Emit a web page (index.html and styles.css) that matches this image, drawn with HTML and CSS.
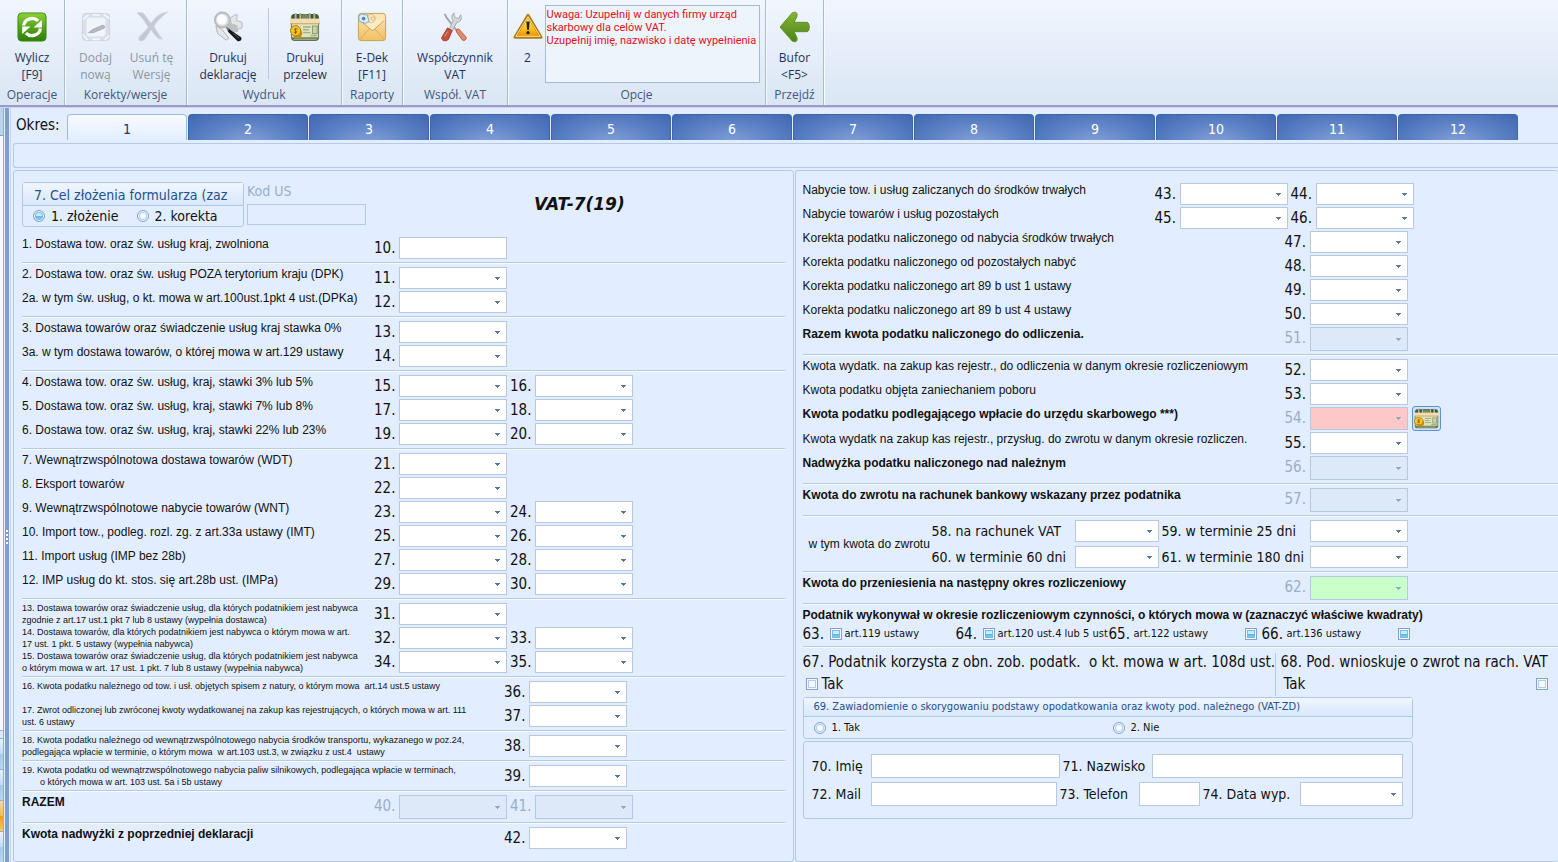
FILE: index.html
```
<!DOCTYPE html>
<html lang="pl">
<head>
<meta charset="utf-8">
<title>VAT-7(19)</title>
<link rel="stylesheet" href="styles.css">
</head>
<body>
<svg class="defs" aria-hidden="true">
  <defs>
    <linearGradient id="gGreen" x1="0" y1="0" x2="0" y2="1"><stop offset="0" stop-color="#8fd03a"/><stop offset=".5" stop-color="#55a51c"/><stop offset="1" stop-color="#2f7d0c"/></linearGradient>
    <linearGradient id="gArrow" x1="0" y1="0" x2="0" y2="1"><stop offset="0" stop-color="#86b535"/><stop offset="1" stop-color="#4c8219"/></linearGradient>
    <linearGradient id="gWarn" x1="0" y1="0" x2="0" y2="1"><stop offset="0" stop-color="#fff27a"/><stop offset=".6" stop-color="#fcc419"/><stop offset="1" stop-color="#f08c00"/></linearGradient>
    <linearGradient id="gMail" x1="0" y1="0" x2="0" y2="1"><stop offset="0" stop-color="#fde9b8"/><stop offset="1" stop-color="#f0bf62"/></linearGradient>
    <symbol id="money" viewBox="0 0 32 32" preserveAspectRatio="none">
      <rect x="1" y="2" width="30" height="29" rx="4" fill="#64764f"/>
      <rect x="2" y="2" width="28" height="7" rx="3" fill="#41553b"/>
      <path d="M6 1v7M11 1v7M21 1v7M26 1v7" stroke="#a9b892" stroke-width="2"/>
      <ellipse cx="16" cy="5" rx="4" ry="3" fill="#75875f"/>
      <rect x="2" y="12" width="28" height="15" fill="#dfe3bd"/>
      <path d="M14 16h8M14 19h6M14 22h8M22 25h7" stroke="#a3b083" stroke-width="1.500" fill="none"/>
      <rect x="24" y="15" width="5" height="8" fill="#cdd3a6" stroke="#8a996d"/>
      <rect x="0" y="7" width="32" height="5" fill="#f4dcb0"/>
      <path d="M0 12.500h32" stroke="#c9a873"/>
      <path d="M4 29h24" stroke="#b9c49a"/>
      <circle cx="8" cy="23" r="5" fill="#c98e08"/><circle cx="6" cy="20" r="5.500" fill="#f4c430" stroke="#a87708"/>
      <path d="M8 18c-3-1-4 1-2 2s2 2.500-2 1.500M6 17v6.500" stroke="#8a5f00" fill="none"/>
    </symbol>
  </defs>
</svg>

<header class="ribbon">
  <section class="rgroup g-op">
    <div class="tools"><button class="tool">
      <svg viewBox="0 0 32 32"><rect x="1" y="1" width="30" height="30" rx="4" fill="url(#gGreen)" stroke="#3b8a12"/><path d="M7 14.500a9.200 9.200 0 0 1 15.500-5" fill="none" stroke="#fff" stroke-width="3.400"/><path d="M26.500 8.500v8h-9z" fill="#fff"/><path d="M25 17.500a9.200 9.200 0 0 1-15.500 5" fill="none" stroke="#fff" stroke-width="3.400"/><path d="M5.500 23.500v-8h9z" fill="#fff"/></svg>
      <span>Wylicz<br>[F9]</span></button></div>
    <h2>Operacje</h2>
  </section>
  <section class="rgroup g-kor">
    <div class="tools"><button class="tool" disabled>
      <svg viewBox="0 0 32 32"><rect x="1.500" y="1.500" width="29" height="29" rx="4" fill="#d9dfe9" stroke="#cbd1dc"/><rect x="6" y="6" width="20" height="20" rx="3" fill="#f1f5fa" stroke="#e4e9f0"/><path d="M2 8l6-5M24 2l6 5M2 24l5 6M25 30l5-5M12 3h8M12 29h8" stroke="#f2f5fa" stroke-width="2"/><path d="M8 22l4-3 11-5 2 1v2l-12 5z" fill="#b5bac3" stroke="#a4aab5"/></svg>
      <span>Dodaj<br>nową</span></button>
    <button class="tool" disabled>
      <svg viewBox="0 0 32 32"><path d="M0 1c5-1 7 0 9 3l6 8C19 6 24 1 33 0c-6 4-11 9-15 15 3 6 6 10 9 14-5 0-7-3-12-10C11 25 9 30 5 31c-3 0-4-2-2-5 3-3 6-6 9-10C8 10 5 5 0 1z" fill="#c2c8d4" stroke="#d3d9e2"/></svg>
      <span>Usuń tę<br>Wersję</span></button></div>
    <h2>Korekty/wersje</h2>
  </section>
  <section class="rgroup g-wyd">
    <div class="tools"><button class="tool">
      <svg viewBox="0 0 32 32"><path d="M18 7l5-4 3 0-1 6 6 2v6l-9 3z" fill="#e3e5e7" stroke="#b4b7bb"/><path d="M15 11l11 3 1 7-9 2z" fill="#bdc0c4"/><path d="M3 15l6 3 8 10-3 2-9-7z" fill="#e4e6e8" stroke="#b0b3b7"/><path d="M13 15l4 2 2 3-3 1z" fill="#777"/><path d="M17 18l13 9c1 2 0 5-4 4L16 21z" fill="#171717"/><path d="M22 23l6 5" stroke="#666"/><circle cx="10" cy="8.500" r="8" fill="#d9dbde" stroke="#b9bbbf" stroke-width="2"/><circle cx="9.500" cy="8" r="5.500" fill="#fafbfc"/></svg>
      <span>Drukuj<br>deklarację</span></button>
    <span class="tsep"></span>
    <button class="tool"><svg><use href="#money"/></svg>
      <span>Drukuj<br>przelew</span></button></div>
    <h2>Wydruk</h2>
  </section>
  <section class="rgroup g-rap">
    <div class="tools"><button class="tool">
      <svg viewBox="0 0 32 32"><rect x="1.500" y="1.500" width="29" height="29" rx="3" fill="url(#gMail)" stroke="#c79a52"/><path d="M2 30l11-12M30 30L19 18" stroke="#d6ab60"/><path d="M2 8l13 11c1 1 2 1 3 0L30 8" fill="#fdebc2" stroke="#c99a4c"/><path d="M2 8h28" stroke="#fde9ba" stroke-width="2"/><circle cx="15" cy="7" r="4.500" fill="none" stroke="#d3bf95"/><circle cx="17" cy="7" r="2" fill="none" stroke="#d3bf95"/><path d="M2 4l3-2 3 1 3 0 1 4 1 3-4 2-4-1-3-2z" fill="#dcecf6" stroke="#7aa5bf"/><circle cx="7" cy="7" r="2" fill="#4f8bb5"/></svg>
      <span>E-Dek<br>[F11]</span></button></div>
    <h2>Raporty</h2>
  </section>
  <section class="rgroup g-wsp">
    <div class="tools"><button class="tool">
      <svg viewBox="0 0 32 32"><path d="M5 2l2 4 11 14" stroke="#a0a6ac" stroke-width="2" fill="none"/><path d="M17 19l3-1 8 9c0 3-2 4-4 3l-6-8z" fill="#e08a70" stroke="#bd5a42"/><path d="M15 1c-3 2-3 6-1 8l-4 9 3 2 5-9c4 0 6-4 4-8l-2 4-4-1-1-3z" fill="#d3d7db" stroke="#a3a9af"/><path d="M8 17l5 3-4 9c-2 3-8 2-7-2z" fill="#c4523d" stroke="#a03a28"/><path d="M5 26l3-5" stroke="#e7a193"/></svg>
      <span>Współczynnik<br>VAT</span></button></div>
    <h2>Współ. VAT</h2>
  </section>
  <section class="rgroup g-opc">
    <div class="tools"><button class="tool narrow">
      <svg viewBox="0 0 32 32"><path d="M16 3.500L30 27H2z" fill="url(#gWarn)" stroke="#b27a14" stroke-width="3" stroke-linejoin="round"/><path d="M16 5L29 26H3z" fill="none" stroke="#ffe79a" stroke-linejoin="round"/><path d="M14.300 10h3.400l-.7 9h-2z" fill="#222"/><circle cx="16" cy="22" r="1.800" fill="#222"/></svg>
      <span>2</span></button>
    <textarea class="alert" readonly aria-label="Uwagi">Uwaga: Uzupełnij w danych firmy urząd
skarbowy dla celów VAT.
Uzupełnij imię, nazwisko i datę wypełnienia</textarea></div>
    <h2>Opcje</h2>
  </section>
  <section class="rgroup g-prz">
    <div class="tools"><button class="tool">
      <svg viewBox="0 0 32 32"><path d="M0 16L13 1c4-2 6 0 5 4l-3 6h14c3 1 3 9 0 10H15l3 6c1 4-1 6-5 4z" fill="url(#gArrow)" stroke="#5c8f22"/></svg>
      <span>Bufor<br>&lt;F5&gt;</span></button></div>
    <h2>Przejdź</h2>
  </section>
</header>

<div class="workspace">
<aside class="side"><i class="cap"></i><i class="blank"></i><i class="nav grip"></i><i class="nav"></i><i class="nav"></i><i class="nav hot"></i><i class="nav"></i></aside>
<div class="splitter"></div>
<main class="content">
  <nav class="tabs"><span class="tabs-label">Okres:</span>
    <button class="tab active">1</button><button class="tab">2</button><button class="tab">3</button><button class="tab">4</button><button class="tab">5</button><button class="tab">6</button><button class="tab">7</button><button class="tab">8</button><button class="tab">9</button><button class="tab">10</button><button class="tab">11</button><button class="tab">12</button>
  </nav>
  <div class="strip"></div>
  <form class="panels">
  <section class="panel left">
    <div class="head">
      <fieldset class="box goal">
        <div class="box-title">7. Cel złożenia formularza (zaz</div>
        <div class="box-body"><label><input type="radio" name="cel" checked>1. złożenie</label><label><input type="radio" name="cel">2. korekta</label></div>
      </fieldset>
      <div class="kod"><label for="kod">Kod US</label><input id="kod" type="text" disabled></div>
      <h1>VAT-7(19)</h1>
    </div>
    <div class="group first">
      <div class="row"><label for="p10">1. Dostawa tow. oraz św. usług kraj, zwolniona</label><span class="num">10.</span><input type="text" id="p10"></div>
    </div>
    <div class="group">
      <div class="row"><label for="p11">2. Dostawa tow. oraz św. usług POZA terytorium kraju (DPK)</label><span class="num">11.</span><select id="p11"></select></div>
      <div class="row"><label for="p12">2a. w tym św. usług, o kt. mowa w art.100ust.1pkt 4 ust.(DPKa)</label><span class="num">12.</span><select id="p12"></select></div>
    </div>
    <div class="group">
      <div class="row"><label for="p13">3. Dostawa towarów oraz świadczenie usług kraj stawka 0%</label><span class="num">13.</span><select id="p13"></select></div>
      <div class="row"><label for="p14">3a. w tym dostawa towarów, o której mowa w art.129 ustawy</label><span class="num">14.</span><select id="p14"></select></div>
    </div>
    <div class="group">
      <div class="row"><label for="p15">4. Dostawa tow. oraz św. usług, kraj, stawki 3% lub 5%</label><span class="num">15.</span><select id="p15"></select><label class="num" for="p16">16.</label><select id="p16"></select></div>
      <div class="row"><label for="p17">5. Dostawa tow. oraz św. usług, kraj, stawki 7% lub 8%</label><span class="num">17.</span><select id="p17"></select><label class="num" for="p18">18.</label><select id="p18"></select></div>
      <div class="row"><label for="p19">6. Dostawa tow. oraz św. usług, kraj, stawki 22% lub 23%</label><span class="num">19.</span><select id="p19"></select><label class="num" for="p20">20.</label><select id="p20"></select></div>
    </div>
    <div class="group">
      <div class="row"><label for="p21">7. Wewnątrzwspólnotowa dostawa towarów (WDT)</label><span class="num">21.</span><select id="p21"></select></div>
      <div class="row"><label for="p22">8. Eksport towarów</label><span class="num">22.</span><select id="p22"></select></div>
      <div class="row"><label for="p23">9. Wewnątrzwspólnotowe nabycie towarów (WNT)</label><span class="num">23.</span><select id="p23"></select><label class="num" for="p24">24.</label><select id="p24"></select></div>
      <div class="row"><label for="p25">10. Import tow., podleg. rozl. zg. z art.33a ustawy (IMT)</label><span class="num">25.</span><select id="p25"></select><label class="num" for="p26">26.</label><select id="p26"></select></div>
      <div class="row"><label for="p27">11. Import usług (IMP bez 28b)</label><span class="num">27.</span><select id="p27"></select><label class="num" for="p28">28.</label><select id="p28"></select></div>
      <div class="row"><label for="p29">12. IMP usług do kt. stos. się art.28b ust. (IMPa)</label><span class="num">29.</span><select id="p29"></select><label class="num" for="p30">30.</label><select id="p30"></select></div>
    </div>
    <div class="group tiny">
      <div class="row"><label for="p31">13. Dostawa towarów oraz świadczenie usług, dla których podatnikiem jest nabywca<br>zgodnie z art.17 ust.1 pkt 7 lub 8 ustawy (wypełnia dostawca)</label><span class="num">31.</span><select id="p31"></select></div>
      <div class="row"><label for="p32">14. Dostawa towarów, dla których podatnikiem jest nabywca o którym mowa w art.<br>17 ust. 1 pkt. 5 ustawy (wypełnia nabywca)</label><span class="num">32.</span><select id="p32"></select><label class="num" for="p33">33.</label><select id="p33"></select></div>
      <div class="row"><label for="p34">15. Dostawa towarów oraz świadczenie usług, dla których podatnikiem jest nabywca<br>o którym mowa w art. 17 ust. 1 pkt. 7 lub 8 ustawy (wypełnia nabywca)</label><span class="num">34.</span><select id="p34"></select><label class="num" for="p35">35.</label><select id="p35"></select></div>
    </div>
    <div class="group tiny">
      <div class="row wide"><label for="p36">16. Kwota podatku należnego od tow. i usł. objętych spisem z natury, o którym mowa&nbsp; art.14 ust.5 ustawy</label><span class="num">36.</span><select id="p36"></select></div>
      <div class="row wide"><label for="p37">17. Zwrot odliczonej lub zwróconej kwoty wydatkowanej na zakup kas rejestrujących, o których mowa w art. 111<br>ust. 6 ustawy</label><span class="num">37.</span><select id="p37"></select></div>
    </div>
    <div class="group tiny">
      <div class="row wide"><label for="p38">18. Kwota podatku należnego od wewnątrzwspólnotowego nabycia środków transportu, wykazanego w poz.24,<br>podlegająca wpłacie w terminie, o którym mowa&nbsp; w art.103 ust.3, w związku z ust.4&nbsp; ustawy</label><span class="num">38.</span><select id="p38"></select></div>
    </div>
    <div class="group tiny">
      <div class="row wide"><label for="p39">19. Kwota podatku od wewnątrzwspólnotowego nabycia paliw silnikowych, podlegająca wpłacie w terminach,<br><span class="indent">o których mowa w art. 103 ust. 5a i 5b ustawy</span></label><span class="num">39.</span><select id="p39"></select></div>
    </div>
    <div class="group">
      <div class="row off"><label class="b" for="p40">RAZEM</label><span class="num">40.</span><select id="p40" disabled></select><label class="num" for="p41">41.</label><select id="p41" disabled></select></div>
    </div>
    <div class="group">
      <div class="row wide"><label class="b" for="p42">Kwota nadwyżki z poprzedniej deklaracji</label><span class="num">42.</span><select id="p42"></select></div>
    </div>
  </section>

  <section class="panel right">
    <div class="group first">
      <div class="row"><label for="p43">Nabycie tow. i usług zaliczanych do środków trwałych</label><span class="num">43.</span><select id="p43"></select><label class="num" for="p44">44.</label><select id="p44"></select></div>
      <div class="row"><label for="p45">Nabycie towarów i usług pozostałych</label><span class="num">45.</span><select id="p45"></select><label class="num" for="p46">46.</label><select id="p46"></select></div>
      <div class="row wide"><label for="p47">Korekta podatku naliczonego od nabycia środków trwałych</label><span class="num">47.</span><select id="p47"></select></div>
      <div class="row wide"><label for="p48">Korekta podatku naliczonego od pozostałych nabyć</label><span class="num">48.</span><select id="p48"></select></div>
      <div class="row wide"><label for="p49">Korekta podatku naliczonego art 89 b ust 1 ustawy</label><span class="num">49.</span><select id="p49"></select></div>
      <div class="row wide"><label for="p50">Korekta podatku naliczonego art 89 b ust 4 ustawy</label><span class="num">50.</span><select id="p50"></select></div>
      <div class="row wide off"><label class="b" for="p51">Razem kwota podatku naliczonego do odliczenia.</label><span class="num">51.</span><select id="p51" disabled></select></div>
    </div>
    <div class="group">
      <div class="row wide"><label for="p52">Kwota wydatk. na zakup kas rejestr., do odliczenia w danym okresie rozliczeniowym</label><span class="num">52.</span><select id="p52"></select></div>
      <div class="row wide"><label for="p53">Kwota podatku objęta zaniechaniem poboru</label><span class="num">53.</span><select id="p53"></select></div>
      <div class="row wide off due"><label class="b" for="p54">Kwota podatku podlegającego wpłacie do urzędu skarbowego ***)</label><span class="num">54.</span><select id="p54" class="red" disabled></select><button type="button" class="pay" aria-label="Przelew"><svg><use href="#money"/></svg></button></div>
      <div class="row wide"><label for="p55">Kwota wydatk na zakup kas rejestr., przysług. do zwrotu w danym okresie rozliczen.</label><span class="num">55.</span><select id="p55"></select></div>
      <div class="row wide off"><label class="b" for="p56">Nadwyżka podatku naliczonego nad należnym</label><span class="num">56.</span><select id="p56" disabled></select></div>
    </div>
    <div class="group">
      <div class="row wide off"><label class="b" for="p57">Kwota do zwrotu na rachunek bankowy wskazany przez podatnika</label><span class="num">57.</span><select id="p57" disabled></select></div>
    </div>
    <div class="group refund">
      <span class="refund-name">w tym kwota do zwrotu</span>
      <label for="p58">58. na rachunek VAT</label><select id="p58"></select><label class="second" for="p59">59. w terminie 25 dni</label><select id="p59"></select>
      <label for="p60">60. w terminie 60 dni</label><select id="p60"></select><label class="second" for="p61">61. w terminie 180 dni</label><select id="p61"></select>
    </div>
    <div class="group">
      <div class="row wide off"><label class="b" for="p62">Kwota do przeniesienia na następny okres rozliczeniowy</label><span class="num">62.</span><select id="p62" class="green" disabled></select></div>
    </div>
    <div class="group acts">
      <p class="acts-title">Podatnik wykonywał w okresie rozliczeniowym czynności, o których mowa w (zaznaczyć właściwe kwadraty)</p>
      <div class="acts-row">
        <label><span class="num">63.</span><input type="checkbox" class="mixed"><span class="txt">art.119 ustawy</span></label>
        <label><span class="num">64.</span><input type="checkbox" class="mixed"><span class="txt">art.120 ust.4 lub 5 ust</span></label>
        <label><span class="num">65.</span><span class="txt">art.122 ustawy</span><input type="checkbox" class="mixed end"></label>
        <label><span class="num">66.</span><span class="txt">art.136 ustawy</span><input type="checkbox" class="mixed end"></label>
      </div>
    </div>
    <div class="group flags">
      <div class="flag"><p>67. Podatnik korzysta z obn. zob. podatk.&nbsp; o kt. mowa w art. 108d ust.</p><label><input type="checkbox">Tak</label></div>
      <div class="flag last"><p>68. Pod. wnioskuje o zwrot na rach. VAT</p><label>Tak<input type="checkbox" class="end"></label></div>
    </div>
    <fieldset class="box zd">
      <div class="box-title">69. Zawiadomienie o skorygowaniu podstawy opodatkowania oraz kwoty pod. należnego (VAT-ZD)</div>
      <div class="box-body"><label><input type="radio" name="zd">1. Tak</label><label><input type="radio" name="zd">2. Nie</label></div>
    </fieldset>
    <div class="box person">
      <div class="prow one"><label for="p70">70. Imię</label><input type="text" id="p70"><label for="p71">71. Nazwisko</label><input type="text" id="p71"></div>
      <div class="prow two"><label for="p72">72. Mail</label><input type="text" id="p72"><label for="p73">73. Telefon</label><input type="text" id="p73"><label for="p74">74. Data wyp.</label><select id="p74"></select></div>
    </div>
  </section>
  </form>
</main>
</div>
</body>
</html>
```

FILE: styles.css
```
* { box-sizing: border-box; }
:root {
  --ui: "DejaVu Sans Condensed", "DejaVu Sans", sans-serif;
  --bg: #e2eeff;
  --line: #b5cae2;
  --field: #b6c9e0;
}
body {
  margin: 0;
  min-height: 100vh;
  display: flex;
  flex-direction: column;
  background: var(--bg);
  font: 15px/18px var(--ui);
  color: #111;
}
button, input, select, textarea { font: inherit; margin: 0; }
h1, h2, p { margin: 0; }
.defs { position: absolute; width: 0; height: 0; }

/* Ribbon */
.ribbon {
  display: flex;
  height: 107px;
  margin-bottom: 1px;
  background: linear-gradient(#f1f6fe, #e3ecf8 60%, #dae6f4);
  border-bottom: 2px solid #9f9bc8;
  box-shadow: 0 1px #cdd3ea;
  font: 12px/17px "Open Sans", "Noto Sans", sans-serif;
}
.rgroup {
  display: flex;
  flex-direction: column;
  flex: none;
  border-right: 1px solid #a9bbd3;
  box-shadow: 1px 0 #f8fbff;
}
.rgroup h2 { font: inherit; color: #3f5781; text-align: center; line-height: 20px; }
.tools { display: flex; height: 85px; justify-content: center; }
.tool {
  display: flex;
  flex-direction: column;
  align-items: center;
  justify-content: flex-start;
  gap: 7px;
  width: 56px;
  padding: 12px 0 0;
  border: 0;
  background: none;
  color: #1e325c;
  text-align: center;
  white-space: nowrap;
}
.tool svg { flex: none; width: 30px; height: 30px; overflow: visible; }
.tool:disabled { color: #8e959f; }
.g-op { width: 65px; }
.g-kor { width: 122px; }
.g-kor .tools { padding-right: 4px; }
.g-wyd { width: 155px; }
.g-wyd .tools { justify-content: flex-end; }
.g-wyd .tool { width: 72px; }
.g-rap { width: 61px; }
.g-wsp { width: 105px; }
.g-wsp .tool { width: 88px; }
.g-opc { width: 258px; }
.g-prz { width: 58px; }
.tool.narrow { width: 34px; }
.tsep { width: 1px; margin: 8px 0 6px 4px; background: #bac9dd; }
.alert {
  width: 215px;
  height: 78px;
  margin: 5px 3px 0 0;
  padding: 2px 0 0 1px;
  border: 1px solid #a6b9d5;
  border-radius: 0;
  background: #edf4fc;
  color: #e01020;
  font: 11px/13px Roboto, "Liberation Sans", sans-serif;
  resize: none;
  overflow: hidden;
  white-space: pre;
}

/* Workspace */
.workspace { display: flex; flex: 1; }
.side { width: 4px; display: flex; flex-direction: column; border-right: 1px solid #90aedb; }
.side .cap { height: 28px; background: #bcd2ef; border-bottom: 1px solid #7f9fce; }
.side .blank { flex: 1; background: #f5f9ff; }
.side .nav { height: 31px; background: linear-gradient(#e6f0fd, #c2dbf8 50%, #a4c8f1 50%, #b9d6f7); border-top: 1px solid #8fb0de; }
.side .grip { height: 8px; background: #dce9fb; }
.side .hot { background: linear-gradient(#fbd9a0, #f6b85b 50%, #ee9b23 50%, #f9c76a); }
.splitter {
  width: 4px;
  margin: 0 1px;
  background: repeating-linear-gradient(#fff 0 2px, #7c9ed1 2px 4px) center 57% / 2px 14px no-repeat, #7c9ed1;
}
.content { flex: 1; min-width: 0; border-left: 1px solid #c4d8f2; padding: 6px 0 0 2px; display: flex; flex-direction: column; }
.tabs { display: flex; height: 26px; padding-right: 40px; gap: 1px; margin-bottom: 3px; }
.tabs-label { width: 53px; padding-left: 3px; line-height: 22px; }
.tab {
  flex: 1;
  height: 26px;
  padding: 3px 0 0;
  border: 1px solid #3d66ad;
  border-bottom: 0;
  border-radius: 4px 4px 0 0;
  background: radial-gradient(ellipse at 50% 120%, #86a4dc, #5b80c4 55%, #4068b2);
  color: #fff;
  font-size: 14px;
}
.tab.active {
  border-color: #9cbbe0;
  background: linear-gradient(#f8fbff, #e2eeff);
  color: #17366f;
}
.strip { height: 25px; border: 1px solid var(--line); border-right: 0; border-radius: 3px 0 0 3px; margin-bottom: 2px; }
.panels { flex: 1; display: flex; gap: 1px; }
.panel { border: 1px solid var(--line); border-radius: 3px; padding: 0 8px; min-width: 0; }
.left { flex: 763; padding-top: 11px; }
.right { flex: 756; padding: 8px 0 0 7px; border-right: 0; }

/* Form rows */
.group { padding: 4px 0 3px; border-top: 1px solid #b7cadf; box-shadow: inset 0 1px #f8fbff; display: grid; gap: 2px; }
.group.first { border: 0; box-shadow: none; }
.row {
  display: grid;
  grid-template-columns: 352px 25px 108px 28px 98px;
  height: 22px;
  align-items: start;
}
.row.wide { grid-template-columns: 482px 25px 98px 34px; }
.row.off { height: 24px; }
.row.due { height: 23px; }
.row > label:first-child { font: 12px/14px "Liberation Sans", Arial, sans-serif; white-space: nowrap; }
.row > label.b { font-weight: bold; }
.tiny .row > label:first-child { font-size: 9px; line-height: 12px; margin-top: -1px; }
.indent { padding-left: 18px; }
.num { line-height: 22px; }
.row > label.num { padding-left: 3px; }
.off .num, .kod label { color: #9aafc6; }
input[type="text"], select {
  width: 100%;
  height: 22px;
  padding: 0 4px;
  border: 1px solid var(--field);
  border-radius: 0;
  background-color: #fff;
}
.off select { height: 24px; }
.due select { height: 23px; }
select {
  appearance: none;
  background-image: url("data:image/svg+xml,%3Csvg xmlns='http://www.w3.org/2000/svg' width='5' height='3'%3E%3Cpath d='M0 0h5v1h-1v1h-1v1h-1v-1h-1v-1h-1z' fill='%235a7898'/%3E%3C/svg%3E");
  background-repeat: no-repeat;
  background-position: right 6px center;
}
select:disabled, input:disabled { background-color: #dde9f9; opacity: 1; }
select:disabled { background-image: url("data:image/svg+xml,%3Csvg xmlns='http://www.w3.org/2000/svg' width='5' height='3'%3E%3Cpath d='M0 0h5v1h-1v1h-1v1h-1v-1h-1v-1h-1z' fill='%2395a9bd'/%3E%3C/svg%3E"); }
select.red { background-color: #ffc8c8; }
select.green { background-color: #c9ffc9; }
.pay { width: 29px; height: 25px; margin: -1px 0 0 4px; padding: 1px; border: 1px solid #5b93cf; border-radius: 3px; background: #cfe2f7; }
.pay svg { display: block; width: 25px; height: 21px; }

/* Group boxes, radios, ticks */
.box { margin: 0; padding: 0; border: 1px solid #b0c8e6; border-radius: 3px; min-width: 0; }
.box-title { overflow: hidden; white-space: nowrap; color: #24508f; border-bottom: 1px solid #b0c8e6; background: linear-gradient(#f0f6ff, #d8e8fc); }
.box-body { display: flex; }
.box-body label { display: flex; align-items: center; }
input[type="radio"], input[type="checkbox"] {
  appearance: none;
  flex: none;
  width: 12px;
  height: 12px;
  border: 1px solid #7fa2cf;
  background: #f4f9ff;
  box-shadow: inset 0 0 0 1px #f4f9ff, inset 0 0 0 2px #b4cceb;
}
input[type="radio"] { border-radius: 50%; }
input[type="radio"]:checked, input.mixed {
  background: linear-gradient(#c9ecfb 45%, #58b4e6 50%, #a3dcfa);
  box-shadow: inset 0 0 0 1px #f4f9ff, inset 0 0 0 2px #7db9e2;
}
.head { display: flex; height: 51px; }
.goal { width: 222px; height: 45px; font-size: 14px; }
.goal .box-title { height: 23px; line-height: 24px; padding-left: 11px; }
.goal .box-body { height: 20px; padding-left: 10px; gap: 18px; }
.goal input { margin-right: 6px; }
.kod { width: 119px; margin-left: 3px; font-size: 14px; }
.kod label { display: block; line-height: 19px; height: 22px; }
.kod input { height: 21px; background: transparent; }
.head h1 { margin-left: 168px; padding-top: 12px; font: italic bold 17px/20px "DejaVu Sans", sans-serif; }
.refund { grid-template-columns: 129px 143px 84px 151px 98px; column-gap: 0; row-gap: 4px; font-size: 14px; }
.refund-name { grid-row: 1 / 3; align-self: center; padding-left: 6px; font: 12px/14px "Liberation Sans", Arial, sans-serif; white-space: nowrap; }
.refund label { line-height: 22px; white-space: nowrap; }
.refund .second { padding-left: 3px; }
.acts { height: 43px; }
.acts-title { font: bold 12px/14px "Liberation Sans", Arial, sans-serif; white-space: nowrap; }
.acts-row { display: grid; grid-template-columns: repeat(4, 153px); }
.acts-row label { display: flex; align-items: center; height: 18px; }
.acts-row .num { width: 25px; flex: none; line-height: 18px; }
.acts-row input { margin: 0 3px 0 2px; }
.acts-row .txt { font-size: 11px; white-space: nowrap; }
.acts-row .end { margin: 0 5px 0 auto; }
.flags { display: flex; gap: 0; height: 51px; padding-top: 6px; }
.flag { white-space: nowrap; line-height: 18px; }
.flag:first-child { width: 473px; border-right: 1px solid #b7cadf; height: 43px; }
.flag.last { flex: 1; padding: 0 12px 0 5px; }
.flag label { display: flex; align-items: center; height: 26px; padding-left: 3px; }
.flag label input { margin-right: 4px; }
.flag label .end { margin: 0 0 0 auto; }
.zd { width: 610px; height: 42px; font-size: 11px; }
.zd .box-title { height: 19px; line-height: 18px; padding-left: 10px; }
.zd .box-body { height: 21px; padding-left: 10px; }
.zd label { width: 299px; }
.zd input { margin-right: 6px; }
.person { width: 610px; height: 78px; margin-top: 2px; padding: 12px 8px; display: grid; gap: 4px; font-size: 14px; }
.prow { display: grid; align-items: center; white-space: nowrap; height: 24px; }
.prow input, .prow select { height: 24px; }
.prow.one { grid-template-columns: 59px 189px 92px 251px; }
.prow.two { grid-template-columns: 59px 186px 82px 61px 100px 103px; }
.prow label:not(:first-child) { padding-left: 3px; }
```
